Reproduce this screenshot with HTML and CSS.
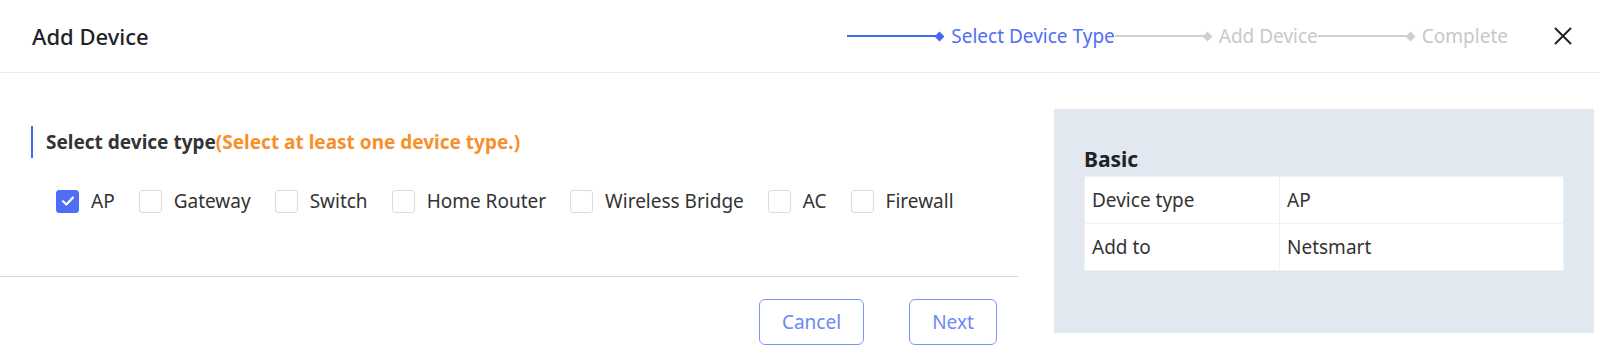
FILE: index.html
```html
<!DOCTYPE html>
<html>
<head>
<meta charset="utf-8">
<link rel="stylesheet" href="styles.css">
</head>
<body>
<div class="dialog">
  <header class="header">
    <div class="title">Add Device</div>
    <div class="stepper">
      <span class="line active"></span><span class="dot active"></span><span class="step active">Select Device Type</span>
      <span class="line"></span><span class="dot"></span><span class="step">Add Device</span>
      <span class="line"></span><span class="dot"></span><span class="step">Complete</span>
    </div>
    <button class="close" aria-label="close">
      <svg width="18" height="18" viewBox="0 0 18 18"><path d="M1 1L17 17M17 1L1 17" stroke="#1f2329" stroke-width="2" fill="none"/></svg>
    </button>
  </header>
  <div class="body">
    <div class="left">
      <div class="content">
        <div class="section-title">Select device type<span class="hint">(Select at least one device type.)</span></div>
        <div class="checks">
          <label class="check"><span class="box checked"><svg width="14" height="12" viewBox="0 0 14 12"><path d="M2 6.2L5.4 9.5L12 2.5" stroke="#fff" stroke-width="2.2" fill="none" stroke-linecap="round" stroke-linejoin="round"/></svg></span>AP</label>
          <label class="check"><span class="box"></span>Gateway</label>
          <label class="check"><span class="box"></span>Switch</label>
          <label class="check"><span class="box"></span>Home Router</label>
          <label class="check"><span class="box"></span>Wireless Bridge</label>
          <label class="check"><span class="box"></span>AC</label>
          <label class="check"><span class="box"></span>Firewall</label>
        </div>
      </div>
      <div class="footer">
        <button class="btn">Cancel</button>
        <button class="btn next">Next</button>
      </div>
    </div>
    <aside class="summary">
      <div class="summary-title">Basic</div>
      <table class="info">
        <tr><td class="k">Device type</td><td>AP</td></tr>
        <tr><td class="k">Add to</td><td>Netsmart</td></tr>
      </table>
    </aside>
  </div>
</div>
</body>
</html>
```
FILE: styles.css
```css
* { box-sizing: border-box; }
html, body { margin: 0; padding: 0; background: #fff; }
body { font-family: "Noto Sans", "Open Sans", sans-serif; color: #2b2f36; width: 1600px; height: 362px; overflow: hidden; }

.header {
  height: 73px;
  border-bottom: 1px solid #ebebeb;
  display: flex;
  align-items: center;
  padding: 0 28px 0 32px;
}
.title { font-size: 22px; font-weight: 500; color: #1f2329; }
.stepper { margin-left: auto; display: flex; align-items: center; font-size: 19px; }
.line { display: block; width: 93px; height: 2px; background: #cfcfcf; }
.line.active { background: #4468f2; }
.dot { display: block; width: 7px; height: 7px; background: #cfcfcf; transform: rotate(45deg); margin-left: -4px; }
.dot.active { background: #4468f2; }
.step { color: #c8c8c8; margin-left: 8px; }
.step.active { color: #4d6ef5; }
.close { border: 0; background: none; padding: 0; margin-left: 46px; width: 18px; height: 18px; display: flex; cursor: pointer; }

.body { display: flex; align-items: flex-start; }
.left { width: 1018px; }
.content { padding: 53px 0 0 31px; height: 203px; }
.section-title {
  border-left: 2px solid #4468f2;
  height: 32px;
  line-height: 32px;
  padding-left: 13px;
  font-size: 19px;
  font-weight: 700;
  color: #333;
}
.hint { color: #f7902a; }
.checks { display: flex; align-items: center; margin-top: 31px; padding-left: 25px; gap: 24px; }
.check { display: flex; align-items: center; font-size: 19px; color: #333; height: 24px; }
.box {
  width: 23px; height: 23px;
  border: 1px solid #dcdcdc;
  border-radius: 3px;
  margin-right: 12px;
  display: flex; align-items: center; justify-content: center;
  background: #fff;
}
.box.checked { background: #4d6ef5; border-color: #4d6ef5; }

.footer {
  border-top: 1px solid #d6d6d6;
  display: flex;
  justify-content: flex-end;
  gap: 45px;
  padding: 22px 21px 0 0;
}
.btn {
  height: 46px;
  width: 105px;
  border: 1px solid #7e93f7;
  border-radius: 6px;
  background: #fff;
  color: #6d87f6;
  font-family: "Noto Sans", sans-serif;
  font-size: 19px;
  padding: 0;
}
.btn.next { width: 88px; }

.summary {
  margin: 36px 0 0 36px;
  width: 540px;
  height: 224px;
  background: #e2e8f0;
  padding: 36px 30px 0 30px;
}
.summary-title { font-size: 21px; font-weight: 700; color: #1f2329; line-height: 28px; height: 31px; }
.info { width: 100%; border-collapse: collapse; background: #fff; font-size: 19px; color: #333; }
.info td { height: 47px; padding: 0 7px; border: 1px solid #eef2f6; }
.info td.k { width: 195px; }
```
